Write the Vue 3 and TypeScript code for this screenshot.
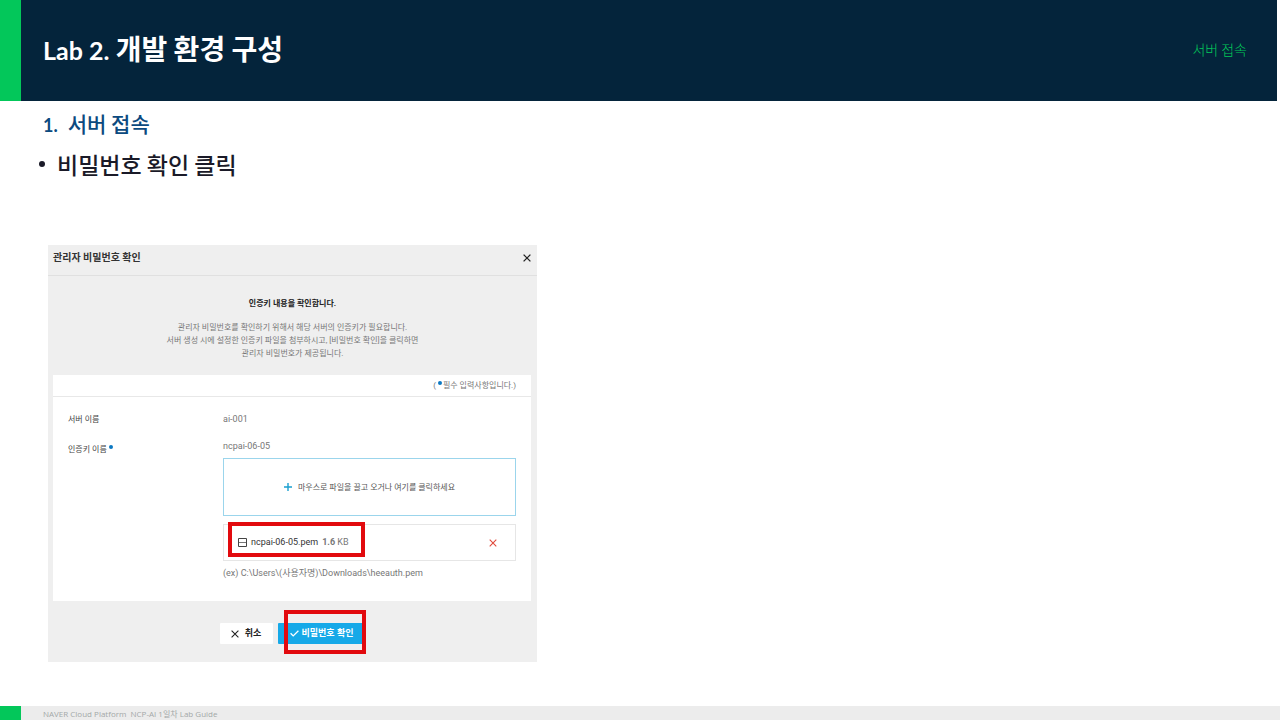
<script setup lang="ts">
import { ref } from 'vue'

const notice: string[] = [
  '관리자 비밀번호를 확인하기 위해서 해당 서버의 인증키가 필요합니다.',
  '서버 생성 시에 설정한 인증키 파일을 첨부하시고, [비밀번호 확인]을 클릭하면',
  '관리자 비밀번호가 제공됩니다.',
]
const serverName = 'ai-001'
const keyName = 'ncpai-06-05'
const file = ref({ name: 'ncpai-06-05.pem', size: '1.6', unit: 'KB' })
</script>

<template>
  <div class="slide">
    <header class="banner">
      <h1 class="title"><span class="latin">Lab 2.</span> 개발 환경 구성</h1>
      <p class="topic">서버 접속</p>
    </header>

    <main class="content">
      <h2 class="step"><span class="num">1.</span>서버 접속</h2>
      <ul class="points">
        <li>비밀번호 확인 클릭</li>
      </ul>

      <section class="dialog" aria-labelledby="dialog-title">
        <div class="dialog-head">
          <h3 id="dialog-title">관리자 비밀번호 확인</h3>
          <button type="button" class="icon-button" aria-label="닫기">
            <svg width="8" height="8" viewBox="0 0 8 8"><path d="M.6.6l6.8 6.8M7.4.6L.6 7.4" stroke="#222" stroke-width="1.3" fill="none" /></svg>
          </button>
        </div>

        <div class="notice">
          <strong>인증키 내용을 확인합니다.</strong>
          <p><span v-for="line in notice" :key="line">{{ line }}</span></p>
        </div>

        <div class="panel">
          <p class="required-note">(<i class="dot"></i>필수 입력사항입니다.)</p>
          <div class="fields">
            <span class="label">서버 이름</span>
            <span class="value">{{ serverName }}</span>
            <label class="label key-label" for="key-file">인증키 이름<i class="dot"></i></label>
            <div class="key">
              <span class="value">{{ keyName }}</span>
              <label class="drop">
                <svg width="8" height="8" viewBox="0 0 8 8"><path d="M4 0v8M0 4h8" stroke="#1ba0d0" stroke-width="1.4" /></svg>
                마우스로 파일을 끌고 오거나 여기를 클릭하세요
                <input id="key-file" type="file" class="hidden-file" />
              </label>
              <div class="file">
                <svg class="file-icon" width="9" height="9" viewBox="0 0 9 9"><path d="M.5.5h8v8h-8z" stroke="#444" stroke-width="1" fill="none" /><path d="M1 4.5h7" stroke="#777" stroke-width="1" /></svg>
                <span class="file-name">{{ file.name }}</span>
                <span class="file-size"><b>{{ file.size }}</b> {{ file.unit }}</span>
                <button type="button" class="icon-button remove" aria-label="파일 삭제">
                  <svg width="8" height="8" viewBox="0 0 8 8"><path d="M.7.7l6.6 6.6M7.3.7L.7 7.3" stroke="#e04a3c" stroke-width="1.1" fill="none" /></svg>
                </button>
                <span class="highlight file-highlight"></span>
              </div>
              <span class="hint">(ex) C:\Users\(사용자명)\Downloads\heeauth.pem</span>
            </div>
          </div>
        </div>

        <div class="actions">
          <button type="button" class="btn cancel">
            <svg width="8" height="8" viewBox="0 0 8 8"><path d="M.6.6l6.8 6.8M7.4.6L.6 7.4" stroke="#222" stroke-width="1.1" fill="none" /></svg>
            취소
          </button>
          <div class="confirm-wrap">
            <button type="button" class="btn confirm">
              <svg width="9" height="7" viewBox="0 0 9 7"><path d="M.6 3.2l2.6 2.7L8.4.7" stroke="#fff" stroke-width="1.3" fill="none" /></svg>
              비밀번호 확인
            </button>
            <span class="highlight confirm-highlight"></span>
          </div>
        </div>
      </section>
    </main>

    <footer class="footer">NAVER Cloud Platform&nbsp; NCP-AI 1일차 Lab Guide</footer>
  </div>
</template>

<style>
body {
  margin: 0;
  background: #fff;
}
</style>

<style scoped>
.slide {
  display: flex;
  flex-direction: column;
  min-height: 100vh;
  box-sizing: border-box;
  font-family: 'Noto Sans CJK KR', sans-serif;
}
h1, h2, h3, p, ul {
  margin: 0;
  padding: 0;
}
svg {
  display: block;
  flex: none;
}
button {
  font: inherit;
  padding: 0;
  border: 0;
  cursor: pointer;
}
.banner {
  display: flex;
  align-items: center;
  justify-content: space-between;
  height: 101px;
  margin-right: 3px;
  padding: 0 30px 4px 22px;
  box-sizing: border-box;
  border-left: 21px solid #03c75a;
  background: #04243b;
}
.title {
  color: #fff;
  font-size: 28px;
  line-height: 40px;
  font-weight: 700;
}
.latin {
  font-family: Lato, 'Noto Sans CJK KR', sans-serif;
  font-size: 25px;
}
.topic {
  color: #03c75a;
  font-size: 14px;
  line-height: 20px;
  font-weight: 300;
}
.content {
  flex: 1;
  padding: 6px 48px 44px 43px;
}
.step {
  display: flex;
  align-items: baseline;
  gap: 10px;
  color: #0b4a80;
  font-size: 21px;
  line-height: 32px;
  font-weight: 500;
}
.num {
  font-family: Lato, 'Noto Sans CJK KR', sans-serif;
  font-size: 18px;
  font-weight: 700;
}
.points {
  padding-top: 7px;
  list-style: none;
  color: #1a1a28;
  font-size: 23px;
  line-height: 32px;
  font-weight: 500;
}
.points li {
  display: flex;
  align-items: center;
  gap: 12px;
  margin-left: -4px;
}
.points li::before {
  content: '';
  width: 6px;
  height: 6px;
  border-radius: 50%;
  background: #1a1a28;
}
.dialog {
  max-width: 489px;
  margin: 65px 0 0 5px;
  background: #efefef;
  color: #777;
  font-family: Roboto, 'Noto Sans CJK KR', sans-serif;
  font-size: 8px;
  line-height: 13px;
}
.dialog-head {
  display: flex;
  align-items: center;
  justify-content: space-between;
  height: 31px;
  padding: 0 6px 5px 5px;
  box-sizing: border-box;
  border-bottom: 1px solid #e0e0e0;
}
.dialog-head h3 {
  color: #333;
  font-size: 10px;
  line-height: 16px;
}
.icon-button {
  background: none;
}
.notice {
  padding: 21px 6px 15px;
  text-align: center;
}
.notice strong {
  display: block;
  color: #222;
}
.notice p {
  padding-top: 11px;
}
.notice p span {
  display: block;
}
.panel {
  margin: 0 6px 0 5px;
  background: #fff;
}
.required-note {
  padding: 4px 15px;
  border-bottom: 1px solid #e8e8e8;
  text-align: right;
}
.dot {
  display: inline-block;
  width: 4px;
  height: 4px;
  margin: 0 1px 0 2px;
  border-radius: 50%;
  background: #0b78c2;
  vertical-align: 3px;
}
.fields {
  display: grid;
  grid-template-columns: 155px 1fr;
  row-gap: 14px;
  padding: 16px 15px 21px;
}
.label {
  color: #444;
}
.key-label {
  padding-top: 3px;
}
.value {
  font-size: 9px;
}
.key {
  display: flex;
  flex-direction: column;
}
.drop {
  position: relative;
  display: flex;
  align-items: center;
  justify-content: center;
  gap: 6px;
  height: 58px;
  margin-top: 5px;
  box-sizing: border-box;
  border: 1px solid #9bd5ec;
  color: #555;
  cursor: pointer;
}
.hidden-file {
  position: absolute;
  inset: 0;
  width: 100%;
  opacity: 0;
}
.file {
  position: relative;
  display: flex;
  align-items: center;
  gap: 4px;
  height: 37px;
  margin: 8px 0 6px;
  padding: 0 18px 0 14px;
  box-sizing: border-box;
  border: 1px solid #e6e6e6;
  font-size: 9px;
}
.file-name {
  color: #333;
}
.remove {
  margin-left: auto;
}
.hint {
  font-size: 9px;
}
.actions {
  display: flex;
  justify-content: center;
  gap: 5px;
  padding: 22px 2px 18px 0;
}
.btn {
  display: flex;
  align-items: center;
  justify-content: center;
  height: 21px;
  font-size: 9px;
  font-weight: 700;
  border-radius: 1px;
}
.cancel {
  gap: 6px;
  width: 53px;
  background: #fff;
  color: #222;
}
.confirm-wrap {
  position: relative;
}
.confirm {
  gap: 3px;
  width: 86px;
  padding-left: 2px;
  background: #16a9e8;
  color: #fff;
}
.highlight {
  position: absolute;
  box-sizing: border-box;
  border: 4px solid #e20a0e;
  pointer-events: none;
}
.file-highlight {
  left: 4px;
  top: -3px;
  width: 137px;
  height: 35px;
}
.confirm-highlight {
  left: 6px;
  top: -13px;
  width: 82px;
  height: 44px;
}
.footer {
  height: 14px;
  padding-left: 22px;
  border-left: 21px solid #03c75a;
  background: #ececec;
  color: #a3a8a8;
  font-family: 'Open Sans', 'Noto Sans CJK KR', sans-serif;
  font-size: 8px;
  line-height: 15px;
  overflow: hidden;
}
</style>
